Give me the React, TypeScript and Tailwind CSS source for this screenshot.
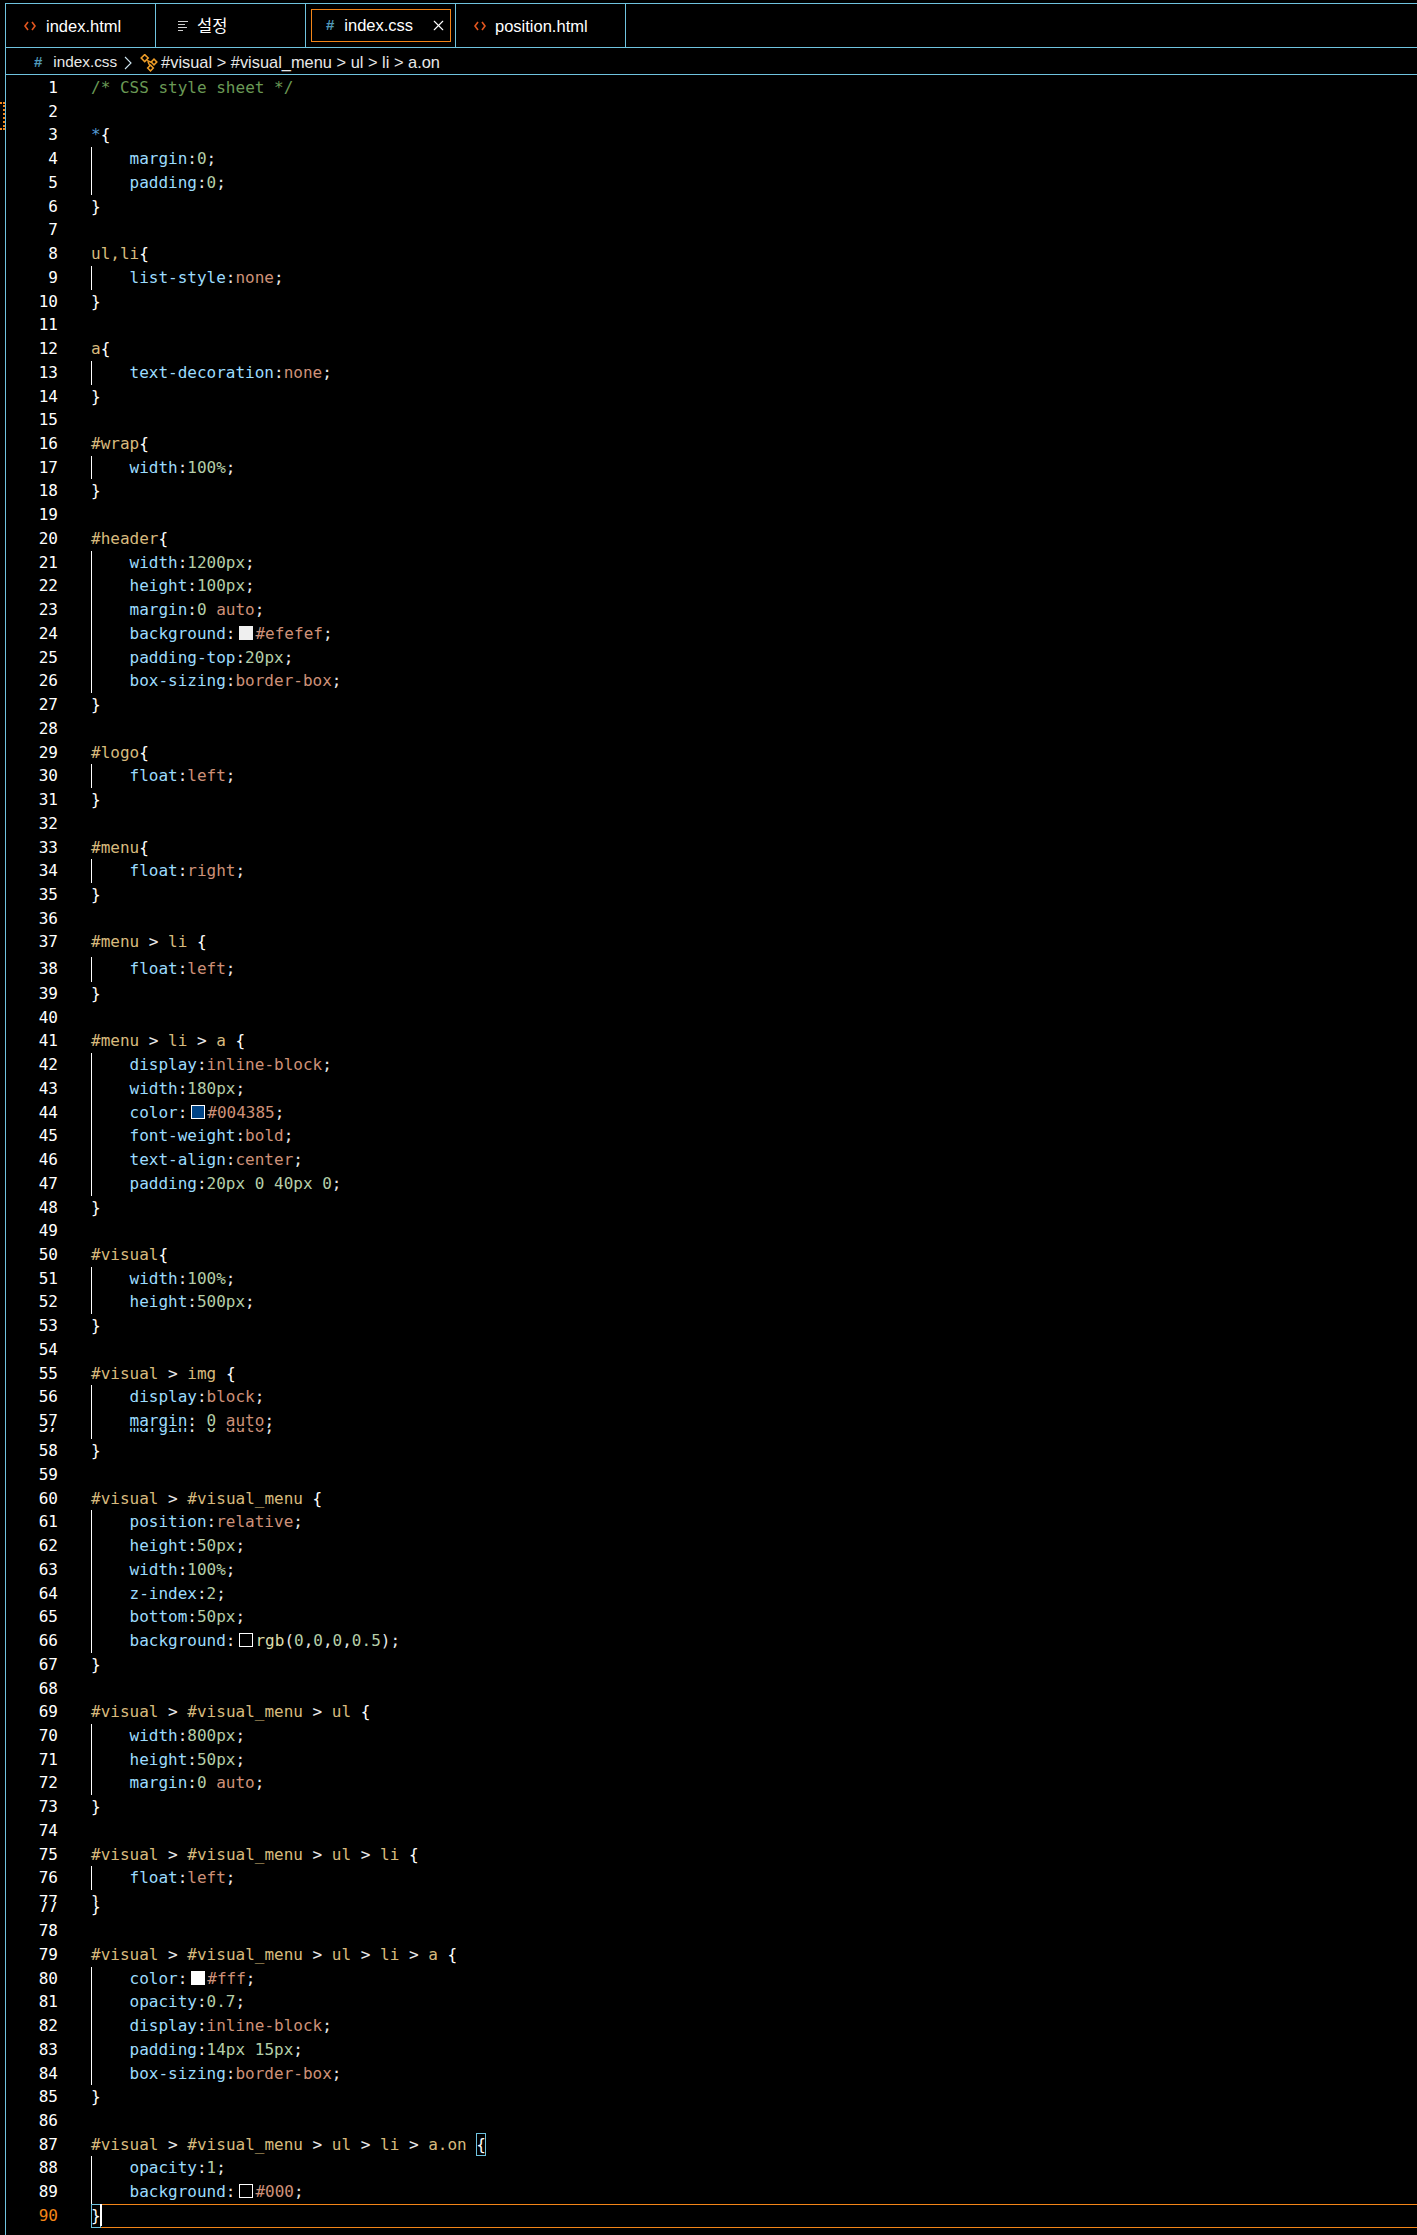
import { X } from 'lucide-react';

const CODE = `/* CSS style sheet */

*{
    margin:0;
    padding:0;
}

ul,li{
    list-style:none;
}

a{
    text-decoration:none;
}

#wrap{
    width:100%;
}

#header{
    width:1200px;
    height:100px;
    margin:0 auto;
    background:#efefef;
    padding-top:20px;
    box-sizing:border-box;
}

#logo{
    float:left;
}

#menu{
    float:right;
}

#menu > li {
    float:left;
}

#menu > li > a {
    display:inline-block;
    width:180px;
    color:#004385;
    font-weight:bold;
    text-align:center;
    padding:20px 0 40px 0;
}

#visual{
    width:100%;
    height:500px;
}

#visual > img {
    display:block;
    margin: 0 auto;
}

#visual > #visual_menu {
    position:relative;
    height:50px;
    width:100%;
    z-index:2;
    bottom:50px;
    background:rgb(0,0,0,0.5);
}

#visual > #visual_menu > ul {
    width:800px;
    height:50px;
    margin:0 auto;
}

#visual > #visual_menu > ul > li {
    float:left;
}

#visual > #visual_menu > ul > li > a {
    color:#fff;
    opacity:0.7;
    display:inline-block;
    padding:14px 15px;
    box-sizing:border-box;
}

#visual > #visual_menu > ul > li > a.on {
    opacity:1;
    background:#000;
}`.split('\n');

const SWATCH: Record<string, string> = {
    '#efefef': 'bg-[#efefef] border-[#efefef]',
    '#004385': 'bg-[#004385] border-white',
    '#fff': 'bg-white border-white',
    '#000': 'bg-black border-white',
    rgb: 'bg-black border-white',
};

function CodeIcon() {
    return (
        <svg width="12" height="10" viewBox="0 0 12 10" fill="none" stroke="#e2561f" strokeWidth="1.6">
            <path d="M4 1 L1 5 L4 9" />
            <path d="M8 1 L11 5 L8 9" />
        </svg>
    );
}

function SettingsIcon() {
    return (
        <svg width="12" height="12" viewBox="0 0 12 12" fill="none" stroke="#d0d0d0" strokeWidth="1">
            <path d="M1 1.5 H11" />
            <path d="M1 4.5 H8" />
            <path d="M1 7.5 H10" />
            <path d="M1 10.5 H6" />
        </svg>
    );
}

function SymbolIcon() {
    return (
        <svg width="18" height="18" viewBox="0 0 18 18" fill="none" stroke="#ee9d28" strokeWidth="1.5">
            <rect x="2.2" y="1.6" width="5" height="5" transform="rotate(45 4.7 4.1)" />
            <rect x="12" y="6" width="4" height="4" transform="rotate(45 14 8)" />
            <rect x="8.5" y="12" width="4" height="4" transform="rotate(45 10.5 14)" />
            <path d="M7 6.5 L10.5 8 H12 M8 8 L10 12" />
        </svg>
    );
}

function Tab({ icon, label, w }: { icon: React.ReactNode; label: string; w: string }) {
    return (
        <div className={`flex h-[43px] items-center border-r border-[#6fc3df] pt-[1px] ${w}`}>
            {icon}
            <span className="text-[16.5px] text-white">{label}</span>
        </div>
    );
}

function Value({ text }: { text: string }) {
    const parts = text.match(/\d[\d.]*(?:px|%)?|#[0-9a-f]+|[a-z-]+|[^a-z0-9#-]+/g) ?? [];
    return (
        <>
            {parts.map((p, i) => {
                if (p === 'rgb') return <span key={i} className="text-[#dcdcaa]">{p}</span>;
                if (/^\d/.test(p)) return <span key={i} className="text-[#b5cea8]">{p}</span>;
                if (/^[#a-z]/.test(p)) return <span key={i} className="text-[#ce9178]">{p}</span>;
                return <span key={i} className="text-[#e8e8e8]">{p}</span>;
            })}
        </>
    );
}

function Code({ text, n }: { text: string; n: number }) {
    if (text === '') return null;
    if (text.startsWith('/*')) return <span className="text-[#6a9955]">{text}</span>;
    if (text === '}') {
        if (n !== 90) return <span className="text-white">{'}'}</span>;
        return (
            <span className="relative inline-block outline outline-1 -outline-offset-1 outline-[#6fc3df] text-white">
                {'}'}
                <span className="absolute left-[9px] top-0 h-[22px] w-[2px] bg-white" />
            </span>
        );
    }
    if (text.startsWith(' ')) {
        const [, prop, sep, value] = text.trim().match(/^([a-z-]+)(:\s?)(.*);$/) ?? [];
        const key = value in SWATCH ? value : value.startsWith('rgb') ? 'rgb' : '';
        return (
            <span className="pl-[37.5px]">
                <span className="text-[#9cdcfe]">{prop}</span>
                <span className="text-[#e8e8e8]">{sep}</span>
                {key && (
                    <span className={`ml-[4px] mr-[2px] inline-block h-[14px] w-[14px] border align-[-1px] ${SWATCH[key]}`} />
                )}
                <Value text={value} />
                <span className="text-[#e8e8e8]">;</span>
            </span>
        );
    }
    // selector line
    const body = text.replace(/\s?\{$/, '');
    const spaced = text.endsWith(' {');
    const parts = body.split(/( > )/);
    return (
        <span>
            {parts.map((p, i) =>
                p === ' > ' ? (
                    <span key={i} className="text-[#e8e8e8]">{p}</span>
                ) : (
                    <span key={i} className={p === '*' ? 'text-[#569cd6]' : 'text-[#d7ba7d]'}>{p}</span>
                ),
            )}
            {spaced && ' '}
            <span className={n === 87 ? 'inline-block text-white outline outline-1 -outline-offset-1 outline-[#6fc3df]' : 'text-white'}>{'{'}</span>
        </span>
    );
}

function Row({ text, n, height }: { text: string; n: number; height: string }) {
    const indented = text.startsWith(' ');
    return (
        <div className={`flex ${height}`}>
            <div className={`w-[52px] text-right ${n === 90 ? 'text-[#f38518]' : 'text-white'}`}>{n}</div>
            <div
                className={`ml-[33px] flex-1 whitespace-pre ${indented ? 'border-l border-white' : ''} ${n === 90 ? 'shadow-[inset_0_1px_0_#f38518,inset_0_-1px_0_#f38518]' : ''}`}
            >
                <Code text={text} n={n} />
            </div>
        </div>
    );
}

function Line({ text, n }: { text: string; n: number }) {
    // the capture was stitched together, some rows sit further apart
    // and two of them (57, 77) show a torn second copy of the row
    const height =
        n === 37 ? 'h-[26.25px]' :
        n === 38 ? 'h-[25.25px]' :
        n === 57 ? 'h-[30px]' :
        n === 77 ? 'h-[29px]' :
        'h-[23.74px]';
    if (n !== 57 && n !== 77) return <Row text={text} n={n} height={height} />;
    return (
        <div className="relative">
            <Row text={text} n={n} height={height} />
            <div aria-hidden="true" className={`absolute inset-x-0 overflow-hidden bg-black ${n === 57 ? 'top-[19px] h-[11px]' : 'top-[12px] h-[17px]'}`}>
                <div className={n === 57 ? '-mt-[13px]' : '-mt-[7px]'}>
                    <Row text={text} n={n} height={height} />
                </div>
            </div>
        </div>
    );
}

export default function App() {
    return (
        <div className="h-[2235px] overflow-hidden bg-black pt-[3px] font-['Liberation_Sans','Noto_Sans_CJK_KR',sans-serif]">
            <div className="relative ml-[5px] h-full border-l border-t border-[#6fc3df]">
                <div className="flex h-[44px] items-start border-b border-[#6fc3df]">
                    <Tab w="w-[150px]" label="index.html" icon={<span className="ml-[18px] mr-[10px] flex"><CodeIcon /></span>} />
                    <Tab w="w-[150px]" label="설정" icon={<span className="ml-[21px] mr-[8px] flex"><SettingsIcon /></span>} />
                    <div className="flex h-[43px] w-[150px] items-center border-r border-[#6fc3df] pl-[5px] pr-[4px]">
                        <div className="flex h-[33px] w-full items-center border border-[#f38518]">
                            <span className="ml-[14px] mr-[10px] text-[15px] font-bold text-[#519aba]">#</span>
                            <span className="text-[16.5px] text-white">index.css</span>
                            <X className="ml-auto mr-[3px] text-white" size={17} strokeWidth={1.6} />
                        </div>
                    </div>
                    <Tab w="w-[170px]" label="position.html" icon={<span className="ml-[18px] mr-[9px] flex"><CodeIcon /></span>} />
                </div>
                <div className="flex h-[27px] items-center border-b border-[#6fc3df] pl-[28px] pt-[3px] text-[#e8e8e8]">
                    <span className="mr-[11px] text-[15px] font-bold text-[#519aba]">#</span>
                    <span className="text-[15.3px]">index.css</span>
                    <svg className="ml-[7px] mr-[8px]" width="8" height="14" viewBox="0 0 8 14" fill="none" stroke="#cfe6f0" strokeWidth="1.1">
                        <path d="M1 1 L7 7 L1 13" />
                    </svg>
                    <SymbolIcon />
                    <span className="ml-[3px] text-[16.4px]">#visual &gt; #visual_menu &gt; ul &gt; li &gt; a.on</span>
                </div>
                <div className="pt-[1px] font-['DejaVu_Sans_Mono',monospace] text-[16px] leading-[23.75px]">
                    {CODE.map((text, i) => (
                        <Line key={i} text={text} n={i + 1} />
                    ))}
                </div>
            </div>
            <div className="absolute left-0 top-[102px] h-[28px] w-[5px] border-y-2 border-r-2 border-dotted border-[#f38518]" />
        </div>
    );
}
